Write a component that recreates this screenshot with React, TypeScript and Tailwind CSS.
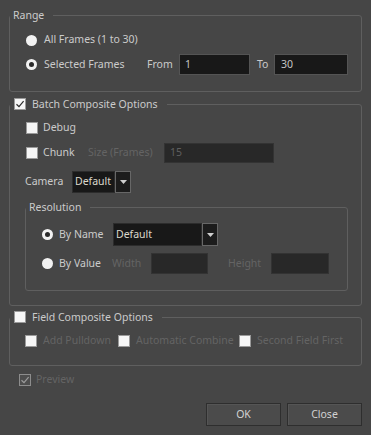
import type { ReactNode } from 'react';

function Check({ on, dim }: { on?: boolean; dim?: boolean }) {
  return (
    <span
      className={
        'flex h-[12px] w-[12px] shrink-0 items-center justify-center border ' +
        (dim ? 'border-[#8d8d8d] bg-[#4e4e4e]' : 'border-[#9a9a9a] bg-[#f6f6f6]')
      }
    >
      {on && (
        <svg width="10" height="10" viewBox="0 0 10 10">
          <path d="M1.5 5.2 L4 7.6 L8.6 2.2" fill="none" stroke={dim ? '#9c9c9c' : '#2c2c2c'} strokeWidth="1.2" />
        </svg>
      )}
    </span>
  );
}

function Radio({ on }: { on?: boolean }) {
  return (
    <span className="flex h-[11px] w-[11px] shrink-0 items-center justify-center rounded-full bg-[#f2f2f2]">
      {on && <span className="h-[5px] w-[5px] rounded-full bg-[#2a2a2a]" />}
    </span>
  );
}

function Group({ title, pl, className, children }: { title: ReactNode; pl: string; className: string; children: ReactNode }) {
  return (
    <fieldset className={'rounded-[3px] border border-[#5f5f5f] ' + className}>
      <legend className={'flex h-[16px] items-center pr-[9px] leading-[16px] ' + pl}>{title}</legend>
      {children}
    </fieldset>
  );
}

function Combo({ w }: { w: string }) {
  return (
    <div className="flex h-full">
      <div className={'flex h-full items-center border border-[#2c2c2c] bg-[#181818] pl-[2px] text-[#dcd9cc] ' + w}>Default</div>
      <div className="flex h-full w-[16px] items-center justify-center border border-[#676767] bg-[#1c1c1c]">
        <svg width="7" height="4" viewBox="0 0 7 4">
          <path d="M0 0 H7 L3.5 4 Z" fill="#cfcfcf" />
        </svg>
      </div>
    </div>
  );
}

export default function App() {
  return (
    <div className="h-[435px] w-[371px] bg-[#464646] px-[9px] pt-[7px] font-['Noto_Sans',sans-serif] text-[10.5px] text-[#cbcbcb]">
      {/* Range */}
      <Group title="Range" pl="pl-[3px]" className="h-[85px]">
        <div className="ml-[16px] mt-[7px] flex h-[20px] items-center gap-[7px]">
          <Radio />
          <span>All Frames (1 to 30)</span>
        </div>
        <div className="ml-[16px] mt-[4px] flex h-[21px] items-center">
          <div className="flex w-[121px] items-center gap-[7px]">
            <Radio on />
            <span>Selected Frames</span>
          </div>
          <span className="w-[32px]">From</span>
          <div className="flex h-full w-[71px] items-center border border-[#545454] bg-[#181818] pl-[5px] text-[#c4c4c4]">1</div>
          <span className="ml-[7px] w-[17px]">To</span>
          <div className="flex h-full w-[74px] items-center border border-[#545454] bg-[#181818] pl-[6px] text-[#c4c4c4]">30</div>
        </div>
      </Group>

      {/* Batch Composite Options */}
      <Group
        title={
          <span className="flex items-center gap-[6px]">
            <Check on />
            <span>Batch Composite Options</span>
          </span>
        }
        pl="pl-[4px]"
        className="mt-[4px] h-[210px]"
      >
        <div className="ml-[16px] mt-[6px] flex h-[20px] items-center gap-[5px]">
          <Check />
          <span>Debug</span>
        </div>
        <div className="ml-[16px] mt-[5px] flex h-[20px] items-center">
          <div className="flex w-[62px] items-center gap-[5px]">
            <Check />
            <span>Chunk</span>
          </div>
          <span className="w-[76px] text-[#646464]">Size (Frames)</span>
          <div className="flex h-full w-[110px] items-center border border-[#333] bg-[#282828] pl-[5px] text-[#5f5f5f]">15</div>
        </div>
        <div className="ml-[15px] mt-[8px] flex h-[22px] items-center">
          <span className="w-[47px]">Camera</span>
          <Combo w="w-[43px]" />
        </div>

        <Group title="Resolution" pl="pl-[3px]" className="ml-[15px] mr-[13px] mt-[6px] h-[92px]">
          <div className="ml-[16px] mt-[8px] flex h-[23px] items-center">
            <div className="flex w-[71px] items-center gap-[6px]">
              <Radio on />
              <span>By Name</span>
            </div>
            <Combo w="w-[89px]" />
          </div>
          <div className="ml-[16px] mt-[7px] flex h-[21px] items-center">
            <div className="flex w-[70px] items-center gap-[6px]">
              <Radio />
              <span>By Value</span>
            </div>
            <span className="w-[39px] text-[#646464]">Width</span>
            <div className="h-full w-[57px] border border-[#333] bg-[#282828]" />
            <span className="ml-[20px] w-[43px] text-[#646464]">Height</span>
            <div className="h-full w-[58px] border border-[#333] bg-[#282828]" />
          </div>
        </Group>
      </Group>

      {/* Field Composite Options */}
      <Group
        title={
          <span className="flex items-center gap-[6px]">
            <Check />
            <span>Field Composite Options</span>
          </span>
        }
        pl="pl-[4px]"
        className="mt-[3px] h-[57px]"
      >
        <div className="ml-[15px] mt-[6px] flex h-[20px] items-center text-[#646464]">
          <div className="flex w-[93px] items-center gap-[6px]">
            <Check />
            <span>Add Pulldown</span>
          </div>
          <div className="flex w-[121px] items-center gap-[6px]">
            <Check />
            <span>Automatic Combine</span>
          </div>
          <div className="flex items-center gap-[6px]">
            <Check />
            <span>Second Field First</span>
          </div>
        </div>
      </Group>

      <div className="ml-[10px] mt-[4px] flex h-[20px] items-center gap-[5px] text-[#646464]">
        <Check on dim />
        <span>Preview</span>
      </div>

      <div className="mt-[13px] flex justify-end gap-[6px]">
        <button className="h-[23px] w-[75px] border border-[#2e2e2e] bg-[#4b4b4b] text-[#d2d2d2] shadow-[inset_1px_1px_0_#555]">OK</button>
        <button className="h-[23px] w-[75px] border border-[#2e2e2e] bg-[#4b4b4b] text-[#d2d2d2] shadow-[inset_1px_1px_0_#555]">Close</button>
      </div>
    </div>
  );
}
